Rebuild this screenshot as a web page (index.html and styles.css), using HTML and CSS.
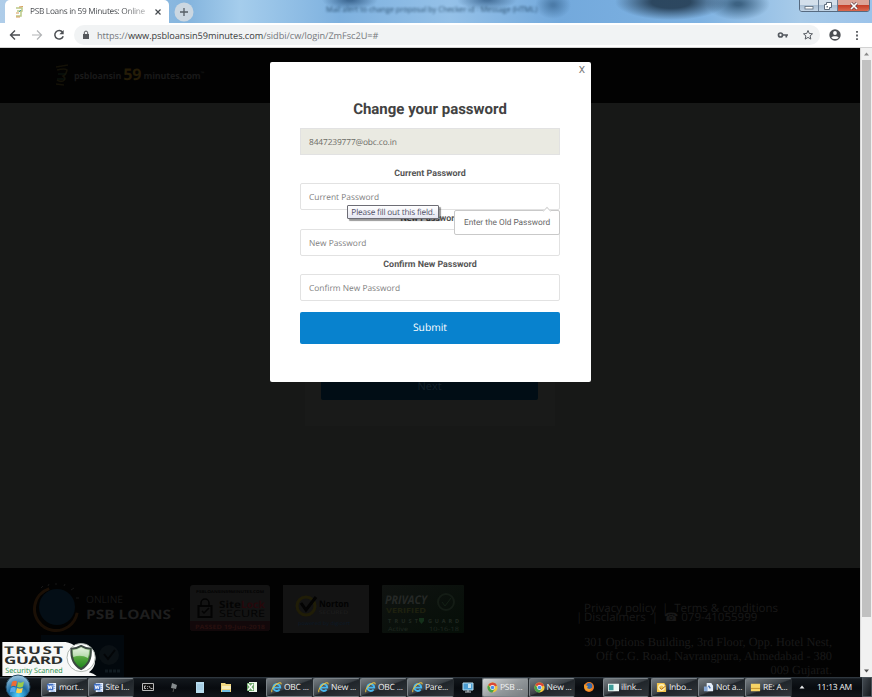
FILE: index.html
```html
<!DOCTYPE html>
<html lang="en">
<head>
<meta charset="utf-8">
<title>PSB Loans in 59 Minutes: Online</title>
<link rel="stylesheet" href="styles.css">
</head>
<body>
<svg class="defs" width="0" height="0" aria-hidden="true">
  <defs>
    <radialGradient id="orb" cx="50%" cy="85%" r="90%"><stop offset="0" stop-color="#55d5ff"/><stop offset=".45" stop-color="#1b6fa8"/><stop offset="1" stop-color="#b5d3e4"/></radialGradient>
    <linearGradient id="green" x2="0" y2="1"><stop offset="0" stop-color="#d9efcf"/><stop offset=".5" stop-color="#55a83f"/><stop offset="1" stop-color="#188018"/></linearGradient>
    <linearGradient id="seal" x2="1" y2="1"><stop offset="0" stop-color="#101311"/><stop offset="1" stop-color="#050e07"/></linearGradient>
    <symbol id="word" viewBox="0 0 12 12"><path d="M3 1h8v10H3z" fill="#eef4ff"/><path d="M8 3h2M8 5h2M8 7h2M5 10h5" stroke="#7da2dc"/><path d="M1 2h7v7H1z" fill="#3f6fc4"/><path d="M2.300 3.500l1 4 1.200-3.500 1.200 3.500 1-4" fill="none" stroke="#fff"/></symbol>
    <symbol id="ie" viewBox="0 0 12 12"><path d="M9.400 8.200a3.800 3.800 0 1 1 .7-2.100H3.300" fill="none" stroke="#48b7ee" stroke-width="2"/><path d="M1.200 11C-.6 9.300 4.200 2.200 8.500 1c2-.6 2.900.1 2.300 1.600" fill="none" stroke="#efc63c" stroke-width="1.100"/></symbol>
    <symbol id="chrome" viewBox="0 0 12 12"><circle cx="6" cy="6" r="5.500" fill="#f3c63b"/><path d="M6 6L1.200 3.300A5.500 5.500 0 0 1 11 3.700z" fill="#d94835"/><path d="M1.200 3.300A5.500 5.500 0 0 0 6 11.500l2.500-4.500-4 .3z" fill="#46a24c"/><circle cx="6" cy="6" r="2.600" fill="#fff"/><circle cx="6" cy="6" r="2" fill="#4b8ce5"/></symbol>
  </defs>
</svg>
<div class="screen">
  <div class="tabstrip">
    <div class="glass-title">Mail alert to change proposal by Checker id - Message (HTML)</div>
    <div class="tab">
      <svg class="favicon" viewBox="0 0 10 12"><path d="M2 2h6v3H3M3 5h4v5H2" fill="none" stroke="#bac987" stroke-width="1.500"/><path d="M5 1l4-.5M2 7h3M2 11h4" stroke="#d69a54"/><path d="M5 6l2-2" stroke="#55a6a2"/></svg>
      <span class="tab-title">PSB Loans in 59 Minutes: Online</span>
      <svg class="tab-close" viewBox="0 0 8 8"><path d="M1.500 1.500l5 5m0-5l-5 5" stroke="#454a4f" stroke-width="1.200"/></svg>
    </div>
    <svg class="newtab" viewBox="0 0 20 20"><circle cx="10" cy="10" r="9.500" fill="#cbd7e1"/><path d="M10 6v8M6 10h8" stroke="#555d64" stroke-width="1.300"/></svg>
    <div class="winbtns">
      <span class="wb"><svg viewBox="0 0 12 10"><rect x="2" y="5.500" width="8" height="2.500" fill="#fff" stroke="#5d6b7b" stroke-width=".8"/></svg></span>
      <span class="wb"><svg viewBox="0 0 12 10"><path d="M4.500 1.500h5v5h-2v2h-5v-5h2z" fill="#fff" stroke="#5d6b7b"/><path d="M4.500 5h1.500v1.500H4.500z" fill="#6d7b8a"/></svg></span>
      <span class="wb wb-close"><svg viewBox="0 0 12 10"><path d="M3 2l6 6m0-6l-6 6" stroke="#66434b" stroke-width="3"/><path d="M3 2l6 6m0-6l-6 6" stroke="#fff" stroke-width="1.700"/></svg></span>
    </div>
  </div>
  <div class="toolbar">
    <svg class="nav" viewBox="0 0 12 12"><path d="M11 6H2M6 1.500L1.500 6 6 10.500" fill="none" stroke="#4c4f53" stroke-width="1.400"/></svg>
    <svg class="nav" viewBox="0 0 12 12"><path d="M1 6h9M6 1.500L10.500 6 6 10.500" fill="none" stroke="#b2b4b6" stroke-width="1.200"/></svg>
    <svg class="nav" viewBox="0 0 12 12"><path d="M9.600 3.200A4.300 4.300 0 1 0 10.200 7.200" fill="none" stroke="#4c4f53" stroke-width="1.500"/><path d="M10.700 1v4.300H6.400z" fill="#4c4f53"/></svg>
    <div class="omnibox">
      <svg class="lock" viewBox="0 0 8 10"><path d="M1 4h6v5H1z" fill="#55585c"/><path d="M2.300 4V2.800a1.700 1.700 0 0 1 3.400 0V4" fill="none" stroke="#55585c"/></svg>
      <span class="url"><i>https://</i>www.psbloansin59minutes.com<i>/sidbi/cw/login/ZmFsc2U=#</i></span>
      <svg class="key" viewBox="0 0 12 10"><circle cx="3.500" cy="5" r="2" fill="none" stroke="#555a60" stroke-width="1.700"/><path d="M5.500 5h5.500M9.300 5v2.600" stroke="#555a60" stroke-width="1.700"/></svg>
      <svg class="star" viewBox="0 0 12 12"><path d="M6 1.500l1.300 3 3.200.3-2.400 2.100.7 3.200L6 8.400l-2.800 1.700.7-3.200-2.400-2.100 3.200-.3z" fill="none" stroke="#555a60"/></svg>
    </div>
    <svg class="person" viewBox="0 0 14 14"><circle cx="7" cy="7" r="5.700" fill="#4c4f53"/><circle cx="7" cy="5" r="1.900" fill="#fff"/><path d="M3.300 9.500C4.500 7.800 9.500 7.800 10.700 9.500 9.500 11.600 4.500 11.600 3.300 9.500z" fill="#fff"/></svg>
    <svg class="dots" viewBox="0 0 4 12"><path d="M1 1h2v2H1zM1 5h2v2H1zM1 9h2v2H1z" fill="#55585c"/></svg>
  </div>
  <div class="viewport">
    <div class="site">
      <header class="site-head">
        <svg class="logo" viewBox="0 0 16 26"><path d="M2 5l12-2M3 8q8-2 10 0-1 5-4 6 4 3 0 5-3 1-6-1M2 22l8 1" fill="none" stroke="#141107" stroke-width="1.600"/><path d="M4 12h8M3 17h8" stroke="#0c1910"/></svg>
        <span class="brand">psbloansin</span><span class="brand-num">59</span><span class="brand">minutes.com<sup>™</sup></span>
      </header>
      <main class="site-main">
        <div class="login-card"><div class="next">Next</div></div>
      </main>
      <footer class="site-foot">
        <div class="seals">
          <svg class="seal-loans" viewBox="0 0 144 50"><circle cx="25" cy="26" r="21.500" fill="none" stroke="#1b1006" stroke-width="3" stroke-dasharray="90 46" transform="rotate(10 25 26)"/><circle cx="26" cy="24" r="18" fill="#040e16"/><path d="M10 5l2-2m5 0l1-2m7 1V0m8 3l1-2m6 6l3-2m2 10h3" stroke="#171717"/><text x="55" y="20" font-size="10" textLength="37" lengthAdjust="spacingAndGlyphs" fill="#161616">ONLINE</text><text x="55" y="36" font-size="13" font-weight="700" textLength="85" lengthAdjust="spacingAndGlyphs" fill="#1e1e1e">PSB LOANS</text><text x="140" y="28" font-size="4" fill="#1e1e1e">™</text></svg>
          <svg class="seal-lock" viewBox="0 0 80 46"><rect width="80" height="46" rx="3" fill="#131313"/><path d="M0 36h80v7q0 3-3 3H3q-3 0-3-3z" fill="#12080a"/><text x="6" y="8" font-size="4" font-weight="700" textLength="68" lengthAdjust="spacingAndGlyphs" fill="#030303">PSBLOANSIN59MINUTES.COM</text><rect x="8.500" y="21" width="13" height="11" fill="none" stroke="#030303" stroke-width="2"/><path d="M11 21v-3a4 4 0 0 1 8 0v3M12 26l2 2 5-5" fill="none" stroke="#030303" stroke-width="1.500"/><text x="29" y="23" font-size="10" font-weight="700" textLength="22" lengthAdjust="spacingAndGlyphs" fill="#040404">Site</text><text x="51" y="23" font-size="10" font-weight="700" textLength="24" lengthAdjust="spacingAndGlyphs" fill="#26080b">Lock</text><text x="29" y="32" font-size="10" textLength="46" lengthAdjust="spacingAndGlyphs" fill="#030303">SECURE</text><text x="5" y="43.500" font-size="6" font-weight="700" textLength="70" lengthAdjust="spacingAndGlyphs" fill="#28100f">PASSED 19-Jun-2018</text></svg>
          <svg class="seal-norton" viewBox="0 0 86 48"><rect width="86" height="48" fill="#131313"/><circle cx="23" cy="21" r="9" fill="none" stroke="#201d07" stroke-width="3"/><path d="M18 18l5 7 10-13" fill="none" stroke="#030303" stroke-width="3"/><text x="36" y="22" font-size="9" font-weight="700" textLength="30" lengthAdjust="spacingAndGlyphs" fill="#020202">Norton</text><text x="36" y="29" font-size="5" textLength="29" lengthAdjust="spacingAndGlyphs" fill="#202020">SECURED</text><text x="15" y="40" font-size="5" textLength="52" lengthAdjust="spacingAndGlyphs" fill="#0c1a29">powered by digicert</text></svg>
          <svg class="seal-privacy" viewBox="0 0 82 48"><rect width="82" height="48" rx="1" fill="url(#seal)"/><text x="3" y="19" font-size="12" font-weight="700" font-style="italic" textLength="42" lengthAdjust="spacingAndGlyphs" fill="#252826">PRIVACY</text><text x="4" y="28" font-size="7" font-weight="700" textLength="40" lengthAdjust="spacingAndGlyphs" fill="#1f210f">VERIFIED</text><circle cx="64" cy="17" r="8" fill="none" stroke="#141c15" stroke-width="2"/><path d="M60 17l3 4 6-8" fill="none" stroke="#142016"/><text x="6" y="38" font-size="5.500" font-weight="700" textLength="30" fill="#202821">TRUST</text><path d="M37 33h5v3l-2.500 3-2.500-3z" fill="#14301a"/><text x="46" y="38" font-size="5.500" font-weight="700" textLength="31" fill="#202821">GUARD</text><text x="6" y="46" font-size="6" textLength="20" lengthAdjust="spacingAndGlyphs" fill="#202821">Active</text><text x="47" y="46" font-size="6" textLength="30" lengthAdjust="spacingAndGlyphs" fill="#202821">10-16-18</text></svg>
        </div>
        <div class="foot-info">
          <div class="links">Privacy policy&nbsp; |&nbsp; Terms &amp; conditions</div>
          <div class="links links-b"><span class="bar">|</span>Disclaimers&nbsp; |&nbsp; ☎ 079-41055999</div>
          <div class="address">301 Options Building, 3rd Floor, Opp. Hotel Nest,<br>Off C.G. Road, Navrangpura, Ahmedabad - 380<br>009 Gujarat.</div>
        </div>
        <svg class="seal-small" viewBox="0 0 83 42"><rect width="83" height="42" fill="#02080d"/><circle cx="68" cy="20" r="10" fill="#0a1014"/><path d="M63 19l4 5 7-9" fill="none" stroke="#030507" stroke-width="2"/><path d="M64 36h15" stroke="#101a20" stroke-width="3" stroke-dasharray="3 1"/></svg>
      </footer>
    </div>
    <div class="scrollbar">
      <svg viewBox="0 0 11 11"><path d="M3 7l2.500-3L8 7z" fill="#8b8b8b"/></svg>
      <div class="thumb"></div>
      <svg class="down" viewBox="0 0 11 11"><path d="M3 4l2.500 3L8 4z" fill="#505050"/></svg>
    </div>
    <form class="modal">
      <span class="modal-close">X</span>
      <h1>Change your password</h1>
      <div class="field field-user">8447239777@obc.co.in</div>
      <label class="lab-first">Current Password</label>
      <div class="field">Current Password</div>
      <label>New Password</label>
      <div class="field">New Password</div>
      <label>Confirm New Password</label>
      <div class="field">Confirm New Password</div>
      <div class="submit">Submit</div>
      <div class="popover">Enter the Old Password</div>
      <div class="hint">Please fill out this field.</div>
    </form>
    <svg class="trust" viewBox="0 0 100 36"><path d="M1 0h65q7 1 10 5h13q10 7 7 18-2 6-6 8 5 1 8 4H1z" fill="#f7f8f7"/><circle cx="82" cy="16" r="14.500" fill="#fff" stroke="#adb5ae"/><path d="M82 4q5 3 10 3 1 15-10 21Q71 22 72 7q5 0 10-3z" fill="url(#green)" stroke="#3b4941" stroke-width="2"/><path d="M82 6q4 2.500 8 2.500.5 4-1 8-7-4-15-1-.600-3-.3-7 4.500 0 8.300-2.500z" fill="#fff" opacity=".55"/><g transform="scale(1.600 1)"><text x="1.700" y="12" font-size="11" font-weight="700" textLength="38" fill="#2c302d">TRUST</text><text x="1.700" y="22.500" font-size="11" font-weight="700" textLength="38" fill="#2c302d">GUARD</text></g><text x="4" y="32" font-size="7.500" textLength="59" lengthAdjust="spacingAndGlyphs" fill="#198a43">Security Scanned</text></svg>
  </div>
  <div class="taskbar">
    <svg class="orb" viewBox="0 0 26 24"><circle cx="13" cy="13" r="12" fill="url(#orb)" stroke="#244a63"/><path d="M7 8q3-2 5-.5l-1 5q-3-1.500-5 .3z" fill="#ed6b35"/><path d="M13 8q3 1.500 6-.5l-1 5q-3 1.700-6 .2z" fill="#9bcc49"/><path d="M5.800 14q2.500-1.800 5-.3l-1 4.600q-2.500-1.300-5 .3z" fill="#55a8eb"/><path d="M12 14q3 1.500 5.800-.2l-1 4.700q-3 1.500-5.800 0z" fill="#ffd04a"/></svg>
    <div class="group g1"><span class="task"><svg><use href="#word"/></svg>mort...</span><span class="task"><svg><use href="#word"/></svg>Site I...</span></div>
    <div class="quick">
      <svg viewBox="0 0 12 12"><path d="M.5 2.500h11v7H.5z" fill="#111" stroke="#b9b9b9"/><path d="M4 5H2.500v2.500H4M5.500 5v.8m0 1.200v.8M7 5l1.500 2.500M9 7.500h1.500" fill="none" stroke="#ddd" stroke-width=".8"/></svg>
      <svg viewBox="0 0 12 12"><path d="M4 2l5 2-1 4-5-1z" fill="#858b8d"/><path d="M6 7l-1 4" stroke="#555"/></svg>
      <svg viewBox="0 0 12 12"><path d="M2 1h8v11H2z" fill="#b8ddef"/><path d="M3 4h6M3 6h6M3 8h6" stroke="#86b3d0" stroke-width=".7"/></svg>
      <svg viewBox="0 0 12 12"><path d="M1 2h4l1 1h5v8H1z" fill="#f1d77f"/><path d="M2 5h9v3H2z" fill="#f9edb9"/><path d="M2 9h8v2H2z" fill="#72bde2"/></svg>
      <svg viewBox="0 0 12 12"><path d="M3 1h8v10H3z" fill="#eef8ea"/><path d="M1 2h7v8H1z" fill="#70a96d"/><path d="M2 3l5 6M7 3L2 9" stroke="#fff" stroke-width="1.300"/></svg>
    </div>
    <div class="group g2"><span class="task"><svg><use href="#ie"/></svg>OBC ...</span><span class="task"><svg><use href="#ie"/></svg>New ...</span><span class="task"><svg><use href="#ie"/></svg>OBC ...</span><span class="task"><svg><use href="#ie"/></svg>Pare...</span></div>
    <svg class="single" viewBox="0 0 12 12"><path d="M1 2h10v7H1z" fill="#4b9dd2" stroke="#b6dced"/><path d="M3 11h6M6 9v2" stroke="#c6d0d6"/><path d="M6 3h3v4H6z" fill="#c3e3f2"/></svg>
    <div class="group g3"><span class="task active"><svg><use href="#chrome"/></svg>PSB ...</span><span class="task"><svg><use href="#chrome"/></svg>New ...</span></div>
    <svg class="single" viewBox="0 0 12 12"><circle cx="6" cy="6" r="5" fill="#ed7b24"/><circle cx="6.300" cy="5" r="3" fill="#356bad"/><path d="M1 3q1 2 4 2L4 7q2 2 5 0-1 3-4 3Q1 9 1 3z" fill="#f1a02e"/></svg>
    <div class="group g4"><span class="task"><svg viewBox="0 0 12 12"><path d="M0 2h12v8H0z" fill="#eef7f4"/><path d="M1 3h5v6H1z" fill="#3e9d99"/></svg>ilink...</span></div>
    <div class="group g5"><span class="task"><svg viewBox="0 0 12 12"><path d="M1 1h8l2 3v7H1z" fill="#f4c64d"/><circle cx="6" cy="6" r="3" fill="none" stroke="#fff3bd" stroke-width="1.500"/><path d="M4 6l2 2 5-4" stroke="#a86624" fill="none"/></svg>Inbo...</span><span class="task"><svg viewBox="0 0 12 12"><path d="M4 1h5l2 3v6H4z" fill="#e6effa"/><path d="M1 5h4v5H1z" fill="#87a8d5"/><path d="M6 4l2 3" stroke="#3c67a8" stroke-width="1.500"/></svg>Not a...</span><span class="task"><svg viewBox="0 0 12 12"><path d="M1 2h10v8H1z" fill="#f6d466"/><path d="M1 7h10" stroke="#c39128"/></svg>RE: A...</span></div>
    <svg class="tray" viewBox="0 0 6 4"><path d="M.5 3.500L3 .5l2.500 3z" fill="#e7e9eb"/></svg>
    <span class="clock">11:13 AM</span>
    <span class="desktop"></span>
  </div>
</div>
</body>
</html>
```
FILE: styles.css
```css
* { box-sizing: border-box; }
body { margin: 0; overflow: hidden; font-family: "Open Sans", sans-serif; text-rendering: geometricPrecision; }
svg { display: block; flex: none; }
.defs { position: absolute; }
.screen { width: 872px; height: 697px; display: flex; flex-direction: column; }

.tabstrip {
  position: relative; height: 23px; flex: none; display: flex; align-items: flex-start; overflow: hidden;
  background:
    radial-gradient(ellipse 56px 18px at 671px 2px, #20374cdd 35%, transparent),
    radial-gradient(ellipse 32px 16px at 738px 4px, #294d6bcc 10%, transparent),
    radial-gradient(ellipse 28px 10px at 350px 0, #285079bb 10%, transparent),
    radial-gradient(ellipse 30px 10px at 487px 0, #285079aa 10%, transparent),
    radial-gradient(ellipse 18px 14px at 553px 5px, #315d8799 10%, transparent),
    linear-gradient(90deg, #afcde9 0, #85b5de 190px, #a5cdec 240px, #7eb1df 340px, #95c1e8 450px, #73a9dc 560px, #7eb2e2 700px, #a8cbe9 800px, #9cc3ea);
}
.glass-title { position: absolute; left: 326px; top: 4px; font-size: 7.600px; line-height: 12px; width: 216px; white-space: nowrap; letter-spacing: -.1px; color: #173956; filter: blur(.8px); opacity: .8; }
.tab { width: 164px; height: 23px; margin-left: 5px; padding: 0 0 0 9px; display: flex; align-items: center; background: #fff; border-radius: 5px 5px 0 0; }
.favicon { width: 10px; height: 12px; }
.tab-title { width: 121px; margin-left: 6px; font-size: 8.300px; letter-spacing: -.3px; color: #4c4f53; white-space: nowrap; -webkit-mask-image: linear-gradient(90deg, #000 92px, #0005 117px); }
.tab-close { width: 8px; height: 8px; margin-left: 3px; }
.newtab { width: 20px; height: 20px; margin: 2px 0 0 5px; }
.winbtns { display: flex; margin: -2px 2px 0 auto; height: 14px; border: 1px solid #566a80; border-radius: 0 0 3px 3px; overflow: hidden; }
.wb { width: 19px; display: flex; justify-content: center; align-items: center; border-right: 1px solid #6c8199; background: linear-gradient(#d3dfeb 50%, #a9bed3 50%, #c2d4e6); }
.wb svg { width: 12px; height: 10px; margin-top: 2px; }
.wb-close { width: 31px; border: 0; background: linear-gradient(#dca498 50%, #c43b25 50%, #d9694f); }

.toolbar { height: 25px; flex: none; display: flex; align-items: center; background: #fff; border-bottom: 1px solid #d2d2d2; }
.nav { width: 12px; height: 12px; margin-left: 9px; }
.nav + .nav { margin-left: 10px; }
.omnibox { width: 746px; height: 20px; margin-left: 9px; padding: 0 6px 0 8px; display: flex; align-items: center; background: #f1f3f4; border-radius: 10px; }
.lock { width: 8px; height: 10px; }
.url { margin-left: 7px; font-size: 9.200px; letter-spacing: -.05px; color: #3b3d40; white-space: nowrap; }
.url i { font-style: normal; color: #75787c; }
.key { width: 12px; height: 10px; margin-left: auto; }
.star { width: 12px; height: 12px; margin-left: 13px; }
.person { width: 14px; height: 14px; margin-left: 8px; }
.dots { width: 4px; height: 11px; margin-left: 13px; }

.viewport { position: relative; height: 629px; flex: none; display: flex; background: #020202; }
.site { width: 860px; display: flex; flex-direction: column; }
.site-head { height: 55px; display: flex; align-items: center; padding: 0 0 1px 54px; color: #191919; background: #020202; }
.logo { width: 16px; height: 26px; margin-right: 4px; }
.brand { font-size: 9px; font-weight: 700; letter-spacing: -.15px; }
.brand sup { font-size: 5px; }
.brand-num { margin: -2px 2px 0 2px; font-size: 16px; font-weight: 700; color: #251c07; }
.site-main { height: 465px; display: flex; justify-content: center; align-items: flex-start; background: #171817; }
.login-card { width: 250px; height: 123px; margin: 200px 1px 0 0; padding: 0 0 26px; display: flex; align-items: flex-end; justify-content: center; background: #191a19; }
.next { width: 217px; height: 26px; flex: none; font-size: 11px; line-height: 26px; text-align: center; color: #13202a; background: #010d15; border-radius: 2px; }
.site-foot { position: relative; height: 109px; display: flex; overflow: hidden; background: #020202; }
.seals { display: flex; padding: 17px 0 0 31px; font-family: "Open Sans", sans-serif; }
.seal-loans { width: 144px; height: 50px; margin-top: -2px; }
.seal-lock { width: 80px; height: 46px; margin-left: 15px; }
.seal-norton { width: 86px; height: 48px; margin-left: 13px; }
.seal-privacy { width: 82px; height: 48px; margin-left: 13px; }
.seal-small { position: absolute; left: 41px; top: 67px; width: 83px; height: 42px; }
.foot-info { width: 257px; margin: 36px 0 0 111px; color: #191919; }
.links { margin-left: 9px; font-size: 11.500px; line-height: 9px; white-space: nowrap; }
.links-b { margin-left: 1px; font-size: 11.500px; }
.bar { display: inline-block; width: 8px; }
.address { margin-top: 13px; font-family: "Liberation Serif", serif; font-size: 12.300px; line-height: 14px; text-align: right; white-space: nowrap; }
.scrollbar { width: 12px; display: flex; flex-direction: column; align-items: center; background: #f1f1f1; border-left: 1px solid #d8d8d8; }
.scrollbar svg { width: 11px; height: 12px; }
.thumb { width: 9px; height: 557px; background: #c1c1c1; }
.down { margin-top: auto; }

.modal { position: absolute; left: 270px; top: 14px; width: 321px; height: 320px; padding: 38px 31px 0 30px; display: flex; flex-direction: column; background: #fff; border-radius: 2px; color: #4c4c4c; }
.modal-close { position: absolute; right: 6px; top: 3px; font: 10px/12px Roboto, sans-serif; color: #777; }
.modal h1 { margin: 0 0 10px; font: 700 15px/18px Roboto, sans-serif; text-align: center; color: #424242; }
.field { height: 27.300px; flex: none; padding-left: 8px; border: 1px solid #e2e2e2; border-radius: 2px; font-size: 8.400px; line-height: 27.500px; color: #818181; background: #fff; }
.field-user { height: 27px; background: #eaeae2; color: #6c6c66; border-radius: 0; letter-spacing: -.13px; }
label { height: 18.300px; flex: none; font: 700 8.900px/19px Roboto, sans-serif; text-align: center; color: #555; }
.modal .lab-first { height: 28px; line-height: 38px; }
.submit { height: 32px; margin-top: 11px; border-radius: 2px; font-size: 10.300px; font-weight: 500; line-height: 33px; text-align: center; color: #fff; background: #0882ce; }
.popover { position: absolute; left: 184px; top: 148px; width: 106px; height: 25px; border: 1px solid #c9c9c9; border-radius: 2px; font: 8.300px/24px Roboto, sans-serif; text-align: center; color: #666; background: #fff; }
.popover::before { content: ""; position: absolute; right: 9px; top: -3px; width: 5px; height: 5px; background: #fff; border: solid #d5d5d5; border-width: 1px 0 0 1px; transform: rotate(45deg); }
.hint { position: absolute; left: 77px; top: 143px; width: 92px; height: 14px; border: 1px solid #6d6d75; border-radius: 1px; font-size: 8.300px; letter-spacing: -.2px; line-height: 13px; text-align: center; white-space: nowrap; color: #53536a; background: linear-gradient(#fff, #e6e7f2); box-shadow: 2px 2px 1px #0006; }
.trust { position: absolute; left: 0; top: 594px; width: 100px; height: 35px; font-family: "Open Sans", sans-serif; }

.taskbar { height: 20px; position: relative; flex: none; display: flex; align-items: center; background: linear-gradient(#37414a, #12171c 2px, #080b0f 55%, #11151a); color: #f2f2f2; font-size: 8.500px; }
.orb { width: 26px; height: 24px; margin: -2px 0 0 5px; }
.group { display: flex; height: 19px; }
.task { flex: 1; display: flex; align-items: center; padding-left: 4px; white-space: nowrap; overflow: hidden; letter-spacing: -.25px; border: 1px solid #7b8287; border-right-color: #252a2e; border-radius: 2px; background: linear-gradient(160deg, #757c81, #3b4146 48%, #20252a 52%, #30363b); }
.task svg { width: 11px; height: 11px; margin-right: 2px; }
.task.active { background: linear-gradient(150deg, #d2d4d5, #92979a 55%, #777c80); }
.g1 { width: 93px; margin-left: 10px; }
.quick { display: flex; gap: 14px; margin: 0 8px 0 8px; }
.quick svg, .single { width: 12px; height: 12px; }
.g2 { width: 188px; }
.single { margin: 0 8px; }
.g3 { width: 93px; }
.g4 { width: 46px; }
.g5 { width: 141px; margin-left: 2px; }
.tray { width: 6px; height: 4px; margin-left: 7px; }
.clock { margin-left: 12px; width: 39px; white-space: nowrap; letter-spacing: -.25px; }
.desktop { width: 10px; height: 20px; margin-left: auto; border: 1px solid #4b535a; background: linear-gradient(110deg, #424950, #14181c); }
```
